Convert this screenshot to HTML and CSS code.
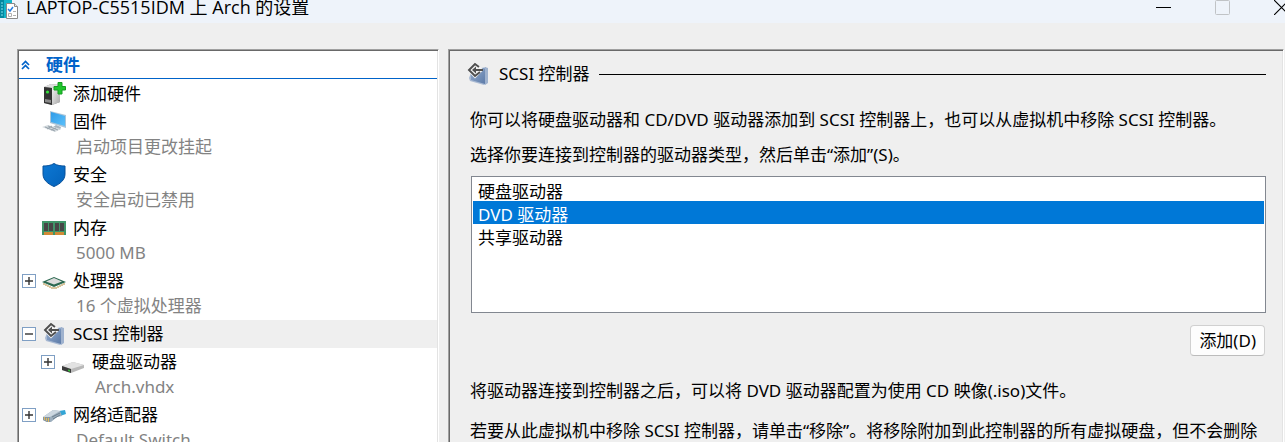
FILE: index.html
```html
<!DOCTYPE html>
<html lang="zh-CN">
<head>
<meta charset="utf-8">
<title>LAPTOP-C5515IDM 上 Arch 的设置</title>
<link rel="stylesheet" href="styles.css">
</head>
<body>
<svg class="defs" width="0" height="0" aria-hidden="true">
  <defs>
    <linearGradient id="g-blue" x1="0" y1="0" x2="1" y2="1"><stop offset="0" stop-color="#93abcd"/><stop offset="1" stop-color="#5d7ba8"/></linearGradient>
    <linearGradient id="g-screen" x1="0" y1="0" x2="1" y2="1"><stop offset="0" stop-color="#2f9be8"/><stop offset="1" stop-color="#5cc0fa"/></linearGradient>
    <linearGradient id="g-metal" x1="0" y1="0" x2="1" y2="1"><stop offset="0" stop-color="#f4f4f4"/><stop offset="1" stop-color="#a9a9a9"/></linearGradient>
    <linearGradient id="g-shield" x1="0" y1="0" x2="1" y2="1"><stop offset="0" stop-color="#0d78d4"/><stop offset="1" stop-color="#0462ba"/></linearGradient>
    <symbol id="scsi" viewBox="0 0 24 24">
      <path d="M3 16 6 8l14-3v17l-2 1L4 19z" fill="#a9bad3"/>
      <path d="M5 11 18 6l1 1v15L5 18z" fill="url(#g-blue)"/>
      <path d="M19 5l3 1v15l-3 2z" fill="#9fb2ce"/>
      <path d="M2 8 9 1l7 7-7 7z" fill="#f4f4f4" stroke="#f4f4f4" stroke-width="2"/>
      <path d="M13 5 9 2 3 8l6 6 5-4M8 8h9" fill="none" stroke="#505050" stroke-width="2"/>
      <path d="M10 4.500v7L6 8z" fill="#505050"/>
    </symbol>
  </defs>
</svg>

<header class="titlebar">
  <svg class="app-icon" width="20" height="20" viewBox="0 0 20 20" aria-hidden="true">
    <path d="M0 0h12v18H0z" fill="#13b5ca"/>
    <path d="M0 0h4v18H0z" fill="#0588a0"/>
    <path d="M1 3h2M1 6h2M1 9h2M1 12h2M1 15h2" stroke="#7fe3ee"/>
    <path d="M6.500 3.500h8l3 3v12h-11z" fill="#fff" stroke="#8a8a8a"/>
    <path d="M14.500 3.500v3h3" fill="#e6e6e6" stroke="#8a8a8a"/>
    <path d="M8 9l2 2 3-4" fill="none" stroke="#2a7de1" stroke-width="1.500"/>
    <path d="M8.500 13.500h3v3h-3z" fill="none" stroke="#b0b0b0"/>
    <path d="M13 11.500h3M13 15.500h3" stroke="#b0b0b0"/>
  </svg>
  <h1 class="title">LAPTOP-C5515IDM 上 Arch 的设置</h1>
  <div class="window-buttons">
    <button class="window-button" type="button" aria-label="最小化"><svg width="15" height="15" viewBox="0 0 15 15"><path d="M0 7.500h15" stroke="#000"/></svg></button>
    <button class="window-button" type="button" aria-label="最大化" disabled><svg width="15" height="15" viewBox="0 0 15 15"><rect x=".5" y=".5" width="14" height="14" rx="1" fill="none" stroke="#c0c3c6"/></svg></button>
    <button class="window-button" type="button" aria-label="关闭"><svg width="15" height="15" viewBox="0 0 15 15"><path d="M0 0l15 15M15 0 0 15" stroke="#000" stroke-width="1.200"/></svg></button>
  </div>
</header>

<main class="dialog">
  <nav class="panel tree" aria-label="硬件">
    <h2 class="tree-heading">
      <svg width="9" height="10" viewBox="0 0 9 10" aria-hidden="true"><path d="M1 5l3.500-3.500L8 5M1 9l3.500-3.500L8 9" fill="none" stroke="#0063c9" stroke-width="1.700"/></svg>
      硬件
    </h2>
    <ul class="items">
      <li>
        <div class="row"><span class="slot"></span>
          <svg class="icon" viewBox="0 0 24 24" aria-hidden="true">
            <path d="M2 5 9 2l9 1v17l-8 3-8-2z" fill="#8c8c8c"/>
            <path d="M2 5l7-3 9 1-8 3z" fill="#dedede"/>
            <path d="M10 6l8-3v17l-8 3z" fill="url(#g-metal)"/>
            <path d="M2 5l8 1v17l-8-2z" fill="#333"/>
            <path d="M3 17l6 1v3l-6-1z" fill="#8a8a8a"/>
            <circle cx="5.500" cy="10" r="1.600" fill="#35e03c"/>
            <path d="M16 .5h4v4h3.500v3.500H20v4h-4V8h-4V4.500h4z" fill="#20c52c" stroke="#149c20"/>
          </svg>
          <span>添加硬件</span></div>
      </li>
      <li>
        <div class="row"><span class="slot"></span>
          <svg class="icon" viewBox="0 0 24 24" aria-hidden="true">
            <path d="M8 1l16 4v13L8 13z" fill="#a9c4d8"/>
            <path d="M9 2l14 4v10L9 12z" fill="url(#g-screen)"/>
            <path d="M14 15l5 2-1 3-7-3z" fill="#a8b5bf"/>
            <path d="M0 17l6-2 13 4-6 3z" fill="#d3dade"/>
            <path d="M3 17l10 4M6 16l10 4M5 19l5-3M9 20l5-2" stroke="#9aa5ae" fill="none"/>
          </svg>
          <span>固件</span></div>
        <p class="detail">启动项目更改挂起</p>
      </li>
      <li>
        <div class="row"><span class="slot"></span>
          <svg class="icon" viewBox="0 0 24 24" aria-hidden="true"><path d="M12 .5c3 2 7 2.500 11 2.500v8c0 6-5 10-11 12.500C6 21 1 17 1 11V3c4 0 8-.5 11-2.500z" fill="url(#g-shield)" stroke="#06509a"/></svg>
          <span>安全</span></div>
        <p class="detail">安全启动已禁用</p>
      </li>
      <li>
        <div class="row"><span class="slot"></span>
          <svg class="icon" viewBox="0 0 24 24" aria-hidden="true">
            <path d="M0 5h24v14H0z" fill="#3f9668"/>
            <path d="M2 7h4v8H2zM7 7h4v8H7zM13 7h4v8h-4zM18 7h4v8h-4z" fill="#474747"/>
            <path d="M2 16h9v3H2zM13 16h9v3h-9z" fill="#d28a35"/>
          </svg>
          <span>内存</span></div>
        <p class="detail">5000 MB</p>
      </li>
      <li>
        <div class="row"><button class="slot expander" type="button" aria-label="展开处理器"><svg width="8" height="8" viewBox="0 0 8 8"><path d="M0 4h8M4 0v8" stroke="#333" stroke-width="1.400"/></svg></button>
          <svg class="icon" viewBox="0 0 24 24" aria-hidden="true">
            <path d="M2 14v2M4 15v2M6 16v2M8 17v2M10 18v2M12 18v2M14 18v2M16 17v2M18 16v2M20 15v2M22 14v2" stroke="#b18a3d"/>
            <path d="M0 13 12 8l12 5-12 5z" fill="#2b6850"/>
            <path d="M4 12.500l8-3.500 8 3.500-8 3z" fill="#dcdcdc"/>
          </svg>
          <span>处理器</span></div>
        <p class="detail">16 个虚拟处理器</p>
      </li>
      <li>
        <div class="row row-selected"><button class="slot expander" type="button" aria-label="折叠 SCSI 控制器"><svg width="8" height="8" viewBox="0 0 8 8"><path d="M0 4h8" stroke="#333" stroke-width="1.400"/></svg></button>
          <svg class="icon" aria-hidden="true"><use href="#scsi"/></svg>
          <span>SCSI 控制器</span></div>
        <ul class="items children">
          <li>
            <div class="row"><button class="slot expander" type="button" aria-label="展开硬盘驱动器"><svg width="8" height="8" viewBox="0 0 8 8"><path d="M0 4h8M4 0v8" stroke="#333" stroke-width="1.400"/></svg></button>
              <svg class="icon" viewBox="0 0 24 24" aria-hidden="true">
                <path d="M1 16 12 12l11 3v3l-13 5-9-3z" fill="#b9b9b9"/>
                <path d="M1 16 12 12l11 3-13 4z" fill="#e2e2e2"/>
                <path d="M1 16l9 3v4l-9-3z" fill="#3c3c3c"/>
                <path d="M7 19.500l2 .6v1.600l-2-.6z" fill="#35c13a"/>
              </svg>
              <span>硬盘驱动器</span></div>
            <p class="detail">Arch.vhdx</p>
          </li>
        </ul>
      </li>
      <li>
        <div class="row"><button class="slot expander" type="button" aria-label="展开网络适配器"><svg width="8" height="8" viewBox="0 0 8 8"><path d="M0 4h8M4 0v8" stroke="#333" stroke-width="1.400"/></svg></button>
          <svg class="icon" viewBox="0 0 24 24" aria-hidden="true">
            <path d="M17 8l6-1 1 4-6 2z" fill="#33a5d6"/>
            <path d="M1 14 11 7l7 1 2 5-5 1-6 5H5l-4-2z" fill="#9caebd"/>
            <path d="M1 14 11 7l7 1-10 6z" fill="#ccd7e0"/>
            <path d="M1 14l7 0v5l-3 0-4-2z" fill="#8695a2"/>
            <path d="M2.500 14v3M4.500 15v3M6.500 15v4" stroke="#dcb95e"/>
            <path d="M10 14l8-4M11 16l7-4" stroke="#6d7f8e"/>
          </svg>
          <span>网络适配器</span></div>
        <p class="detail">Default Switch</p>
      </li>
    </ul>
  </nav>

  <section class="panel page">
    <h2 class="page-heading">
      <svg class="page-icon" aria-hidden="true"><use href="#scsi"/></svg>
      <span>SCSI 控制器</span>
    </h2>
    <p class="intro">你可以将硬盘驱动器和 CD/DVD 驱动器添加到 SCSI 控制器上，也可以从虚拟机中移除 SCSI 控制器。</p>
    <label class="prompt" for="drive-type">选择你要连接到控制器的驱动器类型，然后单击“添加”(S)。</label>
    <select class="drive-list" id="drive-type" size="5">
      <option>硬盘驱动器</option>
      <option selected>DVD 驱动器</option>
      <option>共享驱动器</option>
    </select>
    <button class="add-button" type="button">添加(D)</button>
    <p class="note">将驱动器连接到控制器之后，可以将 DVD 驱动器配置为使用 CD 映像(.iso)文件。</p>
    <p class="note">若要从此虚拟机中移除 SCSI 控制器，请单击“移除”。将移除附加到此控制器的所有虚拟硬盘，但不会删除</p>
  </section>
</main>
</body>
</html>
```

FILE: styles.css
```css
* {
  box-sizing: border-box;
}

body {
  margin: 0;
  height: 100vh;
  overflow: hidden;
  display: flex;
  flex-direction: column;
  background: #efefef;
  color: #000;
  font-family: "Noto Sans", "Noto Sans CJK SC", sans-serif;
  font-size: 17px;
  line-height: 24px;
}

h1,
h2,
p,
ul {
  margin: 0;
  padding: 0;
  font-size: inherit;
  font-weight: 400;
}

ul {
  list-style: none;
}

button,
select {
  font: inherit;
  color: inherit;
}

svg {
  display: block;
  flex: none;
}

.defs {
  position: absolute;
}

.titlebar {
  display: flex;
  align-items: flex-start;
  flex: none;
  height: 23px;
  background: #eef3fa;
}

.title {
  flex: 1;
  margin-left: 6px;
  font-family: "Open Sans", "Noto Sans CJK SC", sans-serif;
  font-size: 18px;
  line-height: 14px;
  white-space: nowrap;
}

.window-buttons {
  display: flex;
  margin-right: -26px;
}

.window-button {
  display: flex;
  justify-content: center;
  width: 59px;
  padding: 0;
  border: 0;
  background: none;
}

.dialog {
  flex: 1;
  min-height: 0;
  display: grid;
  grid-template-columns: 422px 1fr;
  gap: 9px;
  padding: 26px 1px 0 17px;
}

.panel {
  min-width: 0;
  overflow: hidden;
  border: 1px solid #a0a0a0;
  border-right-color: #fff;
  border-bottom: 0;
  box-shadow: inset 1px 1px #696969, inset -1px 0 #e3e3e3;
}

.tree {
  padding: 1px 1px 0;
  background: #fff;
}

.tree-heading {
  display: flex;
  align-items: center;
  gap: 16px;
  height: 28px;
  margin-bottom: 1px;
  padding-left: 2px;
  border-bottom: 1px solid #0063c9;
  color: #0063c9;
  font-weight: 700;
}

.row {
  display: flex;
  align-items: center;
  height: 28px;
  padding-left: 3px;
  white-space: nowrap;
}

.row-selected {
  background: #efefef;
}

.slot {
  width: 14px;
  height: 14px;
  margin-right: 6px;
}

.expander {
  display: flex;
  align-items: center;
  justify-content: center;
  padding: 0;
  border: 1px solid #7f9fc4;
  background: #fff;
}

.icon {
  width: 24px;
  height: 24px;
  margin-right: 7px;
}

.detail {
  height: 25px;
  padding-left: 57px;
  color: #838383;
  line-height: 22px;
  white-space: nowrap;
}

.children {
  padding-left: 19px;
}

.page {
  display: flex;
  flex-direction: column;
  padding: 12px 17px 0 21px;
}

.page > * {
  flex: none;
}

.page-heading {
  display: flex;
  align-items: center;
  gap: 9px;
  height: 24px;
  margin-left: -4px;
}

.page-heading::after {
  content: "";
  flex: 1;
  border-top: 1px solid #000;
}

.page-icon {
  width: 24px;
  height: 24px;
}

.intro {
  margin-top: 22px;
}

.prompt {
  margin-top: 11px;
}

.drive-list {
  height: 137px;
  margin: 9px 0 12px 1px;
  padding: 1px;
  border: 1px solid #828790;
  border-radius: 0;
  background: #fff;
  outline: 0;
  overflow: hidden;
}

.drive-list option {
  height: 23px;
  min-height: 23px;
  padding: 0 5px;
  line-height: 19px;
}

.drive-list option:checked {
  background: #0078d7 linear-gradient(#0078d7, #0078d7);
  color: #fff;
}

.add-button {
  align-self: flex-end;
  height: 31px;
  margin: 0 1px 23px 0;
  padding: 0 8px;
  border: 1px solid #d0d0d0;
  border-bottom-color: #bcbcbc;
  border-radius: 4px;
  background: #fdfdfd;
}

.note {
  margin-bottom: 16px;
  white-space: nowrap;
}
```
